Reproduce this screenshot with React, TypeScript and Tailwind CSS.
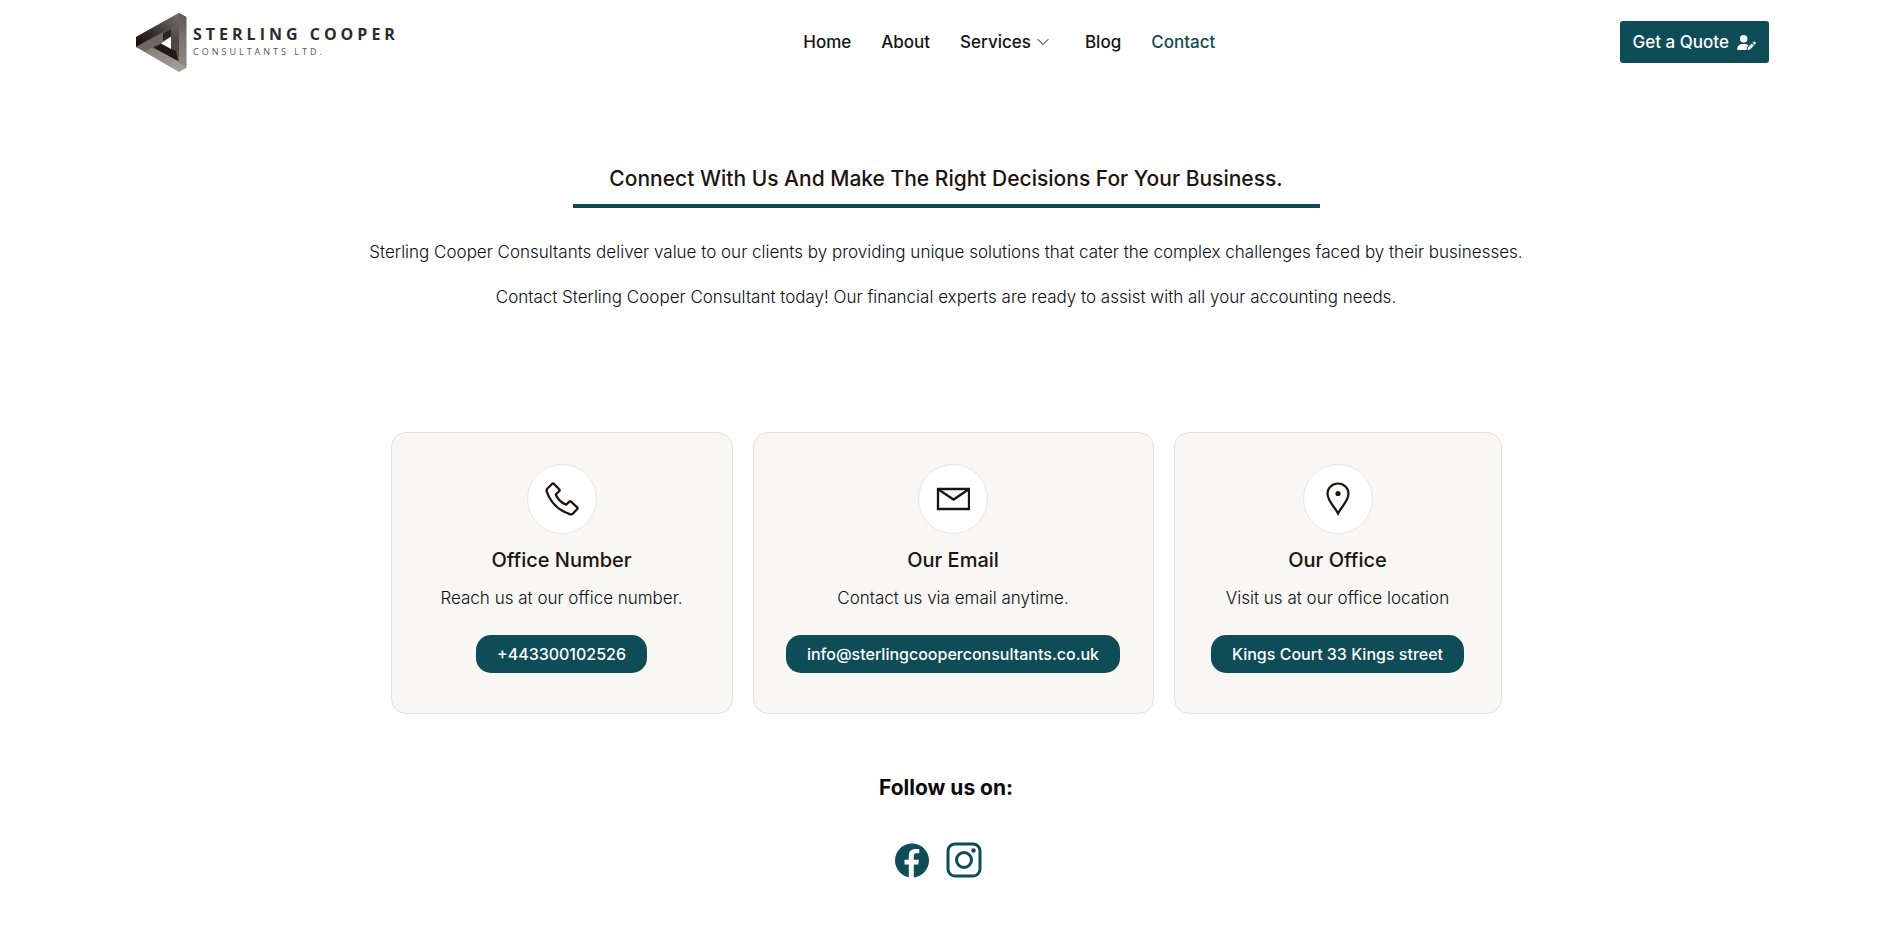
import type { ReactNode } from "react";

function LogoMark() {
  return (
    <svg viewBox="0 0 51 59" className="h-[59px] w-[51px] shrink-0" aria-hidden="true">
      <defs>
        <linearGradient id="top" x1="0" y1="1" x2="1" y2="0">
          <stop offset="0" stopColor="#120e0c" />
          <stop offset="0.45" stopColor="#3a3430" />
          <stop offset="1" stopColor="#77726c" />
        </linearGradient>
        <linearGradient id="right" x1="0" y1="0" x2="0" y2="1">
          <stop offset="0" stopColor="#5d5852" />
          <stop offset="0.5" stopColor="#7c7770" />
          <stop offset="1" stopColor="#8f8b82" />
        </linearGradient>
        <linearGradient id="inner" x1="0" y1="0" x2="0" y2="1">
          <stop offset="0" stopColor="#6b655f" />
          <stop offset="0.5" stopColor="#4a443f" />
          <stop offset="1" stopColor="#5e5852" />
        </linearGradient>
        <linearGradient id="bottom" x1="0" y1="0" x2="1" y2="1">
          <stop offset="0" stopColor="#5c564f" />
          <stop offset="0.4" stopColor="#857f76" />
          <stop offset="1" stopColor="#a8a49b" />
        </linearGradient>
      </defs>
      <path d="M0 24 43 0 50 4V55L43 59 0 34Z" fill="url(#bottom)" />
      <path d="M0 24 43 0V15H36L0 34Z" fill="url(#top)" />
      <path d="M43 0 50.500 4V55L42 49Z" fill="url(#right)" />
      <path d="M35 16 43 10V48L35 42Z" fill="url(#inner)" />
      <path d="M0 34 27 19 35 17V24L18 34 9 38Z" fill="#6e6860" />
      <path d="M27 20 35 16V24L27 28Z" fill="#2b2420" />
      <path d="M17 34.500 26 30 35 35.500 40 38 42 48Z" fill="#1f1a17" />
      <path d="M25 30.500 35 23.500V36Z" fill="#fff" />
    </svg>
  );
}

function PhoneIcon() {
  return (
    <svg viewBox="0 0 34 34" className="size-[34px]" fill="none" stroke="#1c1410" strokeWidth="2.3" strokeLinejoin="round" aria-hidden="true">
      <path d="M2.2 6.7 7.2 1.7Q8 1 8.800 1.700L14.300 7.400Q15 8.200 14.300 9L10.800 12.500C12.500 17.200 16 20.500 21.200 22.700L24.300 19.600Q25.200 18.900 26 19.600L32.200 25.300Q33 26.200 32.200 27L28.300 31.200Q26.800 32.800 24.700 32.200C13.500 28.200 5.300 20.200 1.700 9.500Q1.100 7.900 2.200 6.700Z" />
    </svg>
  );
}

function MailIcon() {
  return (
    <svg viewBox="0 0 34 34" className="size-[34px]" fill="none" stroke="#1c1410" strokeWidth="2.3" aria-hidden="true">
      <path d="M2 7h31v20H2Z" />
      <path d="M2.500 7.500 17.500 17.500 32.500 7.500" />
    </svg>
  );
}

function PinIcon() {
  return (
    <svg viewBox="0 0 34 34" className="size-[34px]" aria-hidden="true">
      <path d="M17 31.500C13.500 24.500 6.500 19 6.500 11.500a10.500 10 0 0 1 21 0C27.500 19 20.500 24.500 17 31.500Z" fill="none" stroke="#1c1410" strokeWidth="2.2" />
      <circle cx="17" cy="11.500" r="2.600" fill="#1c1410" />
    </svg>
  );
}

const cards: { title: string; text: string; action: string; href: string; icon: ReactNode }[] = [
  { title: "Office Number", text: "Reach us at our office number.", action: "+443300102526", href: "tel:+443300102526", icon: <PhoneIcon /> },
  { title: "Our Email", text: "Contact us via email anytime.", action: "info@sterlingcooperconsultants.co.uk", href: "mailto:info@sterlingcooperconsultants.co.uk", icon: <MailIcon /> },
  { title: "Our Office", text: "Visit us at our office location", action: "Kings Court 33 Kings street", href: "#office", icon: <PinIcon /> },
];

export default function App() {
  return (
    <div className="min-h-screen bg-white font-['Inter',sans-serif] text-[#1c1410]">
      <header className="flex h-[84px] items-center justify-between pr-[123px] pl-[136px]">
        <a href="#home" className="flex items-center gap-1.5">
          <LogoMark />
          <span className="flex flex-col font-['Open_Sans',sans-serif] whitespace-nowrap">
            <span className="text-base leading-5 font-bold tracking-[4px] text-[#2b2b2b]">STERLING COOPER</span>
            <span className="text-[9px] leading-4 tracking-[3px] text-[#555]">CONSULTANTS LTD.</span>
          </span>
        </a>
        <nav className="flex items-center gap-[30px] text-[17px] leading-7 font-medium text-[#141414]">
          <a href="#home">Home</a>
          <a href="#about">About</a>
          <a href="#services" className="flex items-center gap-1.5">
            Services
            <svg viewBox="0 0 12 8" className="mr-1.5 h-2 w-3" fill="none" stroke="currentColor" aria-hidden="true">
              <path d="M.7 1.200 6 6.500l5.300-5.300" />
            </svg>
          </a>
          <a href="#blog">Blog</a>
          <a href="#contact" className="text-[#0e4c58]">Contact</a>
        </nav>
        <a href="#quote" className="flex h-[42px] items-center gap-2 rounded-[3px] bg-[#0e4c58] px-[13px] text-[17px] leading-7 font-medium text-white">
          Get a Quote
          <svg viewBox="0 0 640 512" className="h-[15px] w-[19px]" fill="currentColor" aria-hidden="true">
            <path d="M224 256a128 128 0 1 0 0-256 128 128 0 1 0 0 256zm-45.700 48C79.800 304 0 383.800 0 482.300 0 498.700 13.300 512 29.700 512H322.800c-3.100-8.800-3.700-18.400-1.400-27.800l15-60.100c2.800-11.300 8.600-21.500 16.800-29.700l40.300-40.300c-32.100-31-75.700-50.100-123.900-50.100H178.300zm435.500-68.300c-15.600-15.600-40.900-15.600-56.600 0l-29.400 29.400 71 71 29.400-29.400c15.600-15.600 15.600-40.900 0-56.600l-14.400-14.400zM375.900 417c-4.100 4.100-7 9.200-8.400 14.900l-15 60.100c-1.400 5.500 .2 11.200 4.200 15.200s9.700 5.600 15.200 4.200l60.100-15c5.600-1.400 10.800-4.300 14.900-8.400L576.100 358.700l-71-71L375.900 417z" />
          </svg>
        </a>
      </header>

      <main className="flex flex-col items-center text-center">
        <h1 className="mt-[79px] w-full max-w-[747px] border-b-4 border-[#0e4c58] pb-[9px] text-[21px] leading-8 font-medium">
          Connect With Us And Make The Right Decisions For Your Business.
        </h1>
        <div className="mt-7 flex flex-col gap-[13px] text-[17px] leading-8 font-light text-[#0c0c14]">
          <p>Sterling Cooper Consultants deliver value to our clients by providing unique solutions that cater the complex challenges faced by their businesses.</p>
          <p>Contact Sterling Cooper Consultant today! Our financial experts are ready to assist with all your accounting needs.</p>
        </div>

        <section className="mt-[119px] grid w-full max-w-[1111px] grid-cols-[342fr_401fr_328fr] gap-5">
          {cards.map((card) => (
            <article key={card.title} className="flex flex-col items-center rounded-[15px] border border-[#e2e0dc] bg-[#f8f7f3] px-7 pt-[31px] pb-10">
              <span className="flex size-[70px] items-center justify-center rounded-full border border-[#e8e6e2] bg-white">{card.icon}</span>
              <h2 className="mt-2.5 text-xl leading-8 font-medium">{card.title}</h2>
              <p className="mt-2 text-[17px] leading-7 font-light whitespace-nowrap text-[#0c0c14]">{card.text}</p>
              <a href={card.href} className="mt-[23px] flex h-[38px] items-center rounded-[15px] bg-[#0e4c58] px-[21px] text-base font-medium whitespace-nowrap text-white">
                {card.action}
              </a>
            </article>
          ))}
        </section>

        <h2 className="mt-[58px] text-[21px] leading-8 font-bold text-[#0b0b0b]">Follow us on:</h2>
        <div className="mt-[38px] mr-4 flex gap-4 text-[#0e4c58]">
          <a href="#facebook" aria-label="Facebook">
            <svg viewBox="0 0 36 36" className="size-9" aria-hidden="true">
              <circle cx="18" cy="18.500" r="17" fill="currentColor" />
              <path d="M14.800 36V22.500h-4.300v-4.800h4.300v-4.200c0-4.400 2.600-6.500 6.500-6.500 1.500 0 2.900.1 4 .3v4h-2.600c-2.200 0-2.900 1-2.900 2.600v3.800h5.200l-.8 4.800h-4.400V36Z" fill="#fff" />
            </svg>
          </a>
          <a href="#instagram" aria-label="Instagram">
            <svg viewBox="0 0 36 36" className="size-9" fill="none" stroke="currentColor" strokeWidth="3" aria-hidden="true">
              <rect x="2" y="2" width="32" height="32" rx="7" />
              <circle cx="18" cy="18" r="7.500" />
              <circle cx="27.500" cy="8.500" r="2.200" fill="currentColor" stroke="none" />
            </svg>
          </a>
        </div>
      </main>
    </div>
  );
}
